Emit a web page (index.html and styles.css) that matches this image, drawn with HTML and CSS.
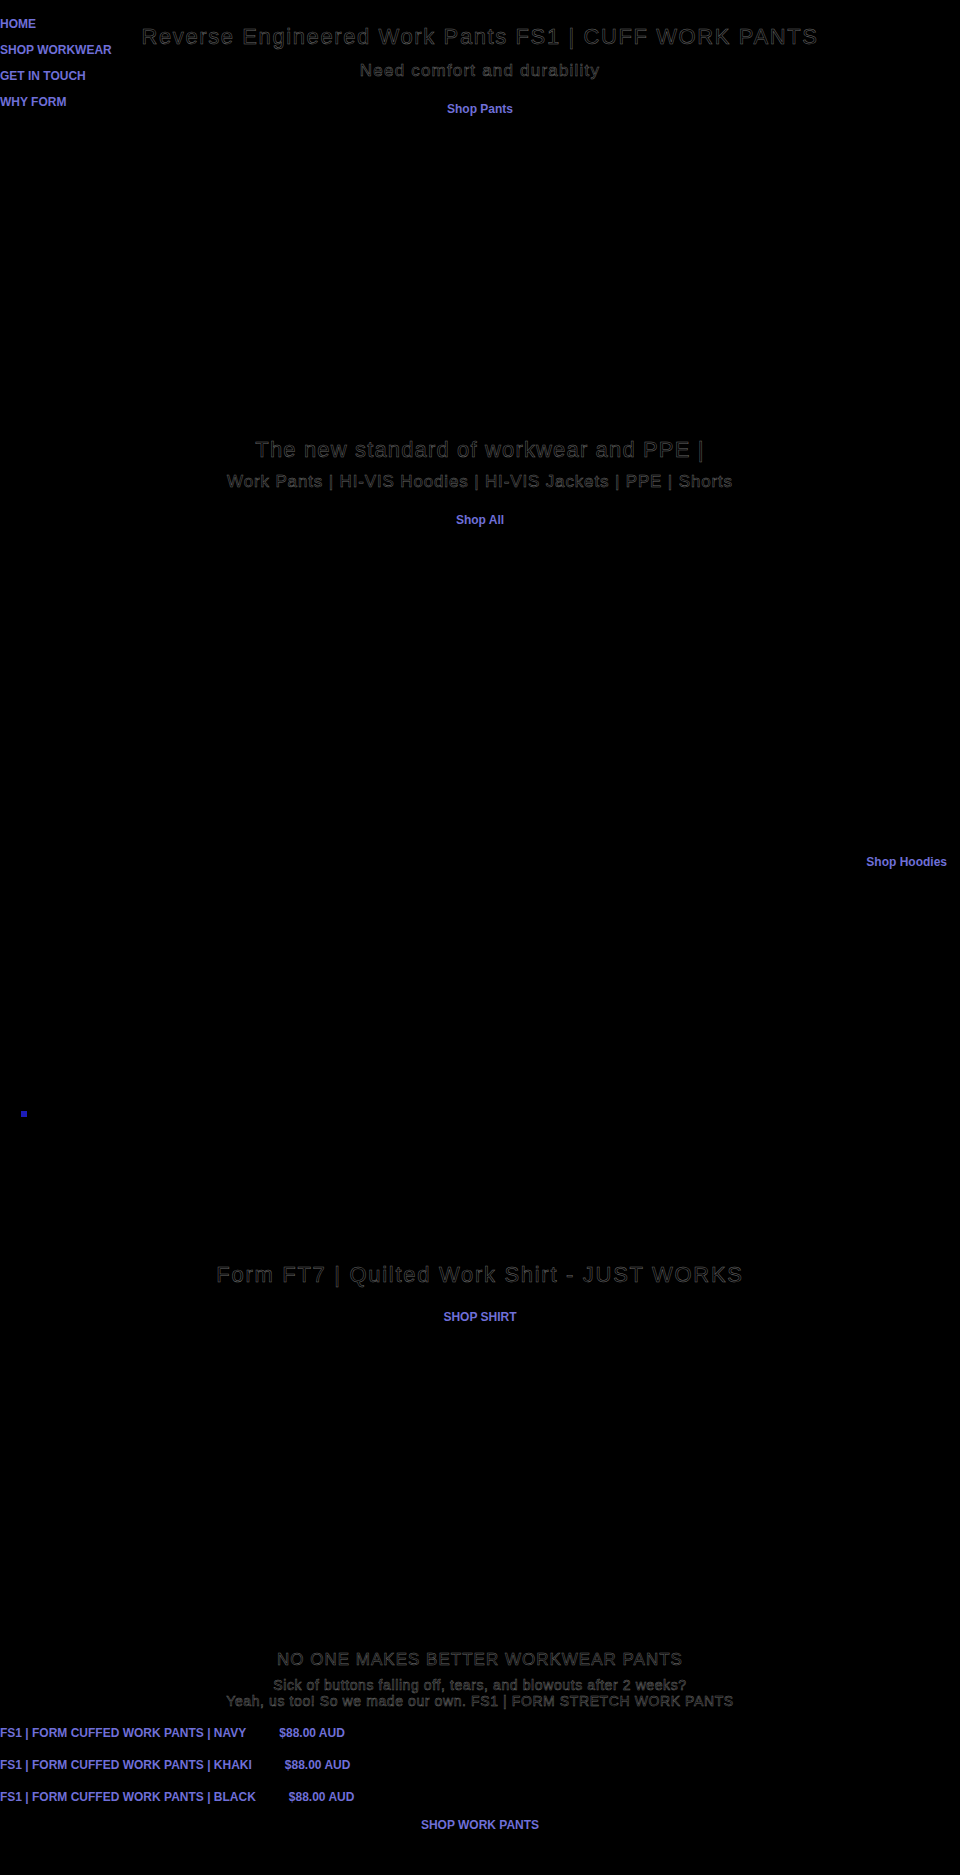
FILE: index.html
```html
<!DOCTYPE html>
<html>
<head>
<meta charset="utf-8">
<link rel="stylesheet" href="styles.css">
</head>
<body>
<nav class="nav">
  <a href="#">HOME</a>
  <a href="#">SHOP WORKWEAR</a>
  <a href="#">GET IN TOUCH</a>
  <a href="#">WHY FORM</a>
</nav>
<section class="hero hero-pants">
  <h1 class="title title-main">Reverse Engineered Work Pants FS1 | CUFF WORK PANTS</h1>
  <p class="sub">Need comfort and durability</p>
  <a class="link link-pants" href="#">Shop Pants</a>
</section>
<section class="hero hero-all">
  <h2 class="title title-all">The new standard of workwear and PPE |</h2>
  <p class="sub sub-wide">Work Pants | HI-VIS Hoodies | HI-VIS Jackets | PPE | Shorts</p>
  <a class="link link-all" href="#">Shop All</a>
</section>
<section class="hero hero-hoodies">
  <a class="link" href="#">Shop Hoodies</a>
</section>
<section class="hero hero-dot">
  <span class="dot"></span>
</section>
<section class="hero hero-shirt">
  <h2 class="title title-shirt">Form FT7 | Quilted Work Shirt - JUST WORKS</h2>
  <a class="link link-shirt" href="#">SHOP SHIRT</a>
</section>
<section class="pants">
  <h2 class="title title-small">NO ONE MAKES BETTER WORKWEAR PANTS</h2>
  <p class="copy">Sick of buttons falling off, tears, and blowouts after 2 weeks?<br>Yeah, us too! So we made our own. FS1 | FORM STRETCH WORK PANTS</p>
  <ul class="products">
    <li><a class="link" href="#">FS1 | FORM CUFFED WORK PANTS | NAVY</a><span class="price link">$88.00 AUD</span></li>
    <li><a class="link" href="#">FS1 | FORM CUFFED WORK PANTS | KHAKI</a><span class="price link">$88.00 AUD</span></li>
    <li><a class="link" href="#">FS1 | FORM CUFFED WORK PANTS | BLACK</a><span class="price link">$88.00 AUD</span></li>
  </ul>
  <a class="link link-more" href="#">SHOP WORK PANTS</a>
</section>
</body>
</html>
```
FILE: styles.css
```css
html, body {
  margin: 0;
  padding: 0;
  background: #000;
}
body {
  width: 960px;
  height: 1875px;
  position: relative;
  font-family: "Liberation Sans", Arial, sans-serif;
  color: #000;
}
.link {
  color: #6f6fd8;
  font-weight: bold;
  font-size: 12px;
  text-decoration: none;
  line-height: 14px;
}
.nav {
  position: absolute;
  left: 0;
  top: 17px;
  display: flex;
  flex-direction: column;
  gap: 12px;
}
.nav a {
  color: #6f6fd8;
  font-weight: bold;
  font-size: 12px;
  line-height: 14px;
  text-decoration: none;
}
.hero {
  display: flex;
  flex-direction: column;
  align-items: center;
  text-align: center;
}
.title {
  margin: 0;
  font-size: 22px;
  font-weight: normal;
  line-height: 26px;
  letter-spacing: 1px;
  color: #000;
  -webkit-text-stroke: 0.5px #6a6a6a;
}
.title-main { letter-spacing: 1.6px; }
.title-all { letter-spacing: 1.15px; }
.title-shirt { letter-spacing: 1.7px; }
.sub {
  margin: 0;
  font-size: 17px;
  line-height: 20px;
  letter-spacing: 1.2px;
  color: #000;
  -webkit-text-stroke: 0.5px #6a6a6a;
}
.hero-pants {
  padding-top: 24px;
  height: 437px;
  box-sizing: border-box;
}
.hero-pants .sub { margin-top: 11px; }
.link-pants { margin-top: 21px; }
.hero-all {
  height: 374px;
  box-sizing: border-box;
}
.hero-all .sub { margin-top: 9px; letter-spacing: 0.85px; }
.link-all { margin-top: 21px; }
.hero-hoodies {
  align-items: flex-end;
  padding-right: 13px;
  height: 280px;
  box-sizing: border-box;
  padding-top: 44px;
}
.hero-dot {
  align-items: flex-start;
  height: 171px;
  box-sizing: border-box;
}
.dot {
  display: block;
  width: 6px;
  height: 6px;
  margin-left: 21px;
  margin-top: 20px;
  background: #1c1cb8;
}
.hero-shirt {
  height: 388px;
  box-sizing: border-box;
}
.link-shirt { margin-top: 22px; }
.pants {
  text-align: center;
}
.title-small {
  font-size: 17px;
  line-height: 20px;
}
.copy {
  margin: 8px 0 0;
  font-size: 14px;
  line-height: 15.5px;
  letter-spacing: 0.6px;
  color: #000;
  -webkit-text-stroke: 0.5px #6a6a6a;
}
.products {
  list-style: none;
  margin: 17px 0 0;
  padding: 0;
  text-align: left;
  display: flex;
  flex-direction: column;
  gap: 18px;
}
.products li {
  font-size: 12px;
  line-height: 14px;
}
.price {
  margin-left: 33px;
}
.link-more {
  display: inline-block;
  margin-top: 14px;
}
```
